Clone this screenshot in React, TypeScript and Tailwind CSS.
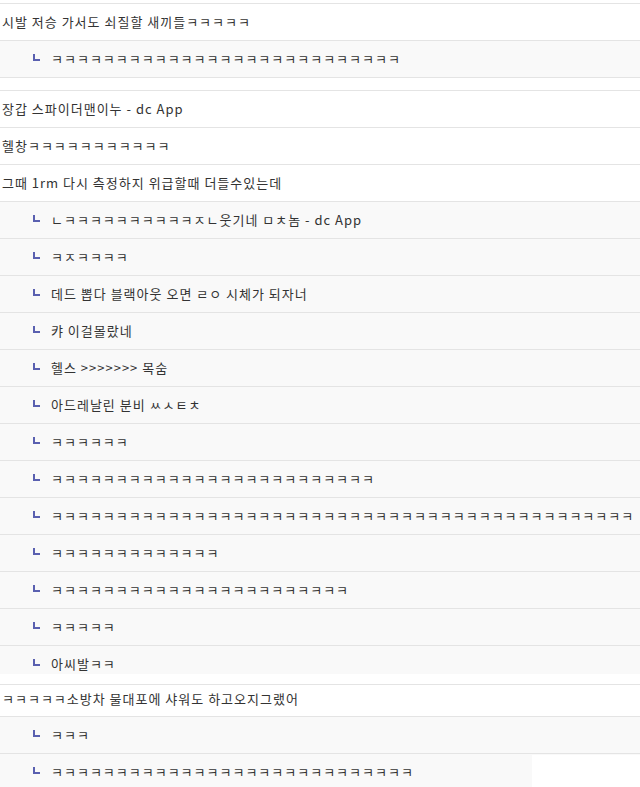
const font = { fontFamily: '"Noto Sans CJK KR", "Liberation Sans", sans-serif' };

const k = (n: number) => "ㅋ".repeat(n);

type Row = { text: string; reply?: boolean };

const firstThread: Row[] = [
  { text: "시발 저승 가서도 쇠질할 새끼들" + k(5) },
  { text: k(27), reply: true },
];

const secondThread: Row[] = [
  { text: "장갑 스파이더맨이누 - dc App" },
  { text: "헬창" + k(11) },
  { text: "그때 1rm 다시 측정하지 위급할때 더들수있는데" },
  { text: "ㄴ" + k(10) + "ㅈㄴ웃기네 ㅁㅊ놈 - dc App", reply: true },
  { text: "ㅋㅈ" + k(4), reply: true },
  { text: "데드 뽑다 블랙아웃 오면 ㄹㅇ 시체가 되자너", reply: true },
  { text: "캬 이걸몰랐네", reply: true },
  { text: "헬스 >>>>>>> 목숨", reply: true },
  { text: "아드레날린 분비 ㅆㅅㅌㅊ", reply: true },
  { text: k(6), reply: true },
  { text: k(25), reply: true },
  { text: k(45), reply: true },
  { text: k(13), reply: true },
  { text: k(23), reply: true },
  { text: k(5), reply: true },
];

function ReplyMark() {
  return (
    <svg width="7" height="7" viewBox="0 0 7 7" className="-mt-[3px] shrink-0">
      <path d="M0 0h2v5h5v2H0z" fill="#5a60b0" />
    </svg>
  );
}

function CommentRow({ text, reply }: Row) {
  if (reply) {
    return (
      <div className="flex h-[37px] items-center gap-[11px] whitespace-nowrap border-t border-[#e4e4e4] bg-[#f9f9f9] pl-[33px] text-[13px] tracking-[1px] text-[#333]">
        <ReplyMark />
        <span>{text}</span>
      </div>
    );
  }
  return (
    <div className="flex h-[37px] items-center whitespace-nowrap border-t border-[#e4e4e4] bg-white pl-[2px] text-[13px] tracking-[1px] text-[#333]">
      {text}
    </div>
  );
}

export default function App() {
  return (
    <div className="h-[787px] w-[640px] overflow-hidden bg-white pt-[3px]" style={font}>
      {/* first thread */}
      <div className="border-b border-[#e4e4e4]">
        {firstThread.map((r, i) => (
          <CommentRow key={i} {...r} />
        ))}
      </div>

      {/* second thread, last reply is cut off in the capture */}
      <div className="mt-3">
        {secondThread.map((r, i) => (
          <CommentRow key={i} {...r} />
        ))}
        <div className="h-[29px] overflow-hidden">
          <CommentRow text="아씨발ㅋㅋ" reply />
        </div>
      </div>

      {/* third thread */}
      <div className="mt-[10px]">
        <div className="flex h-[32px] items-center whitespace-nowrap border-t border-[#e4e4e4] bg-white pb-1 pl-[2px] text-[13px] tracking-[1px] text-[#333]">
          {k(5)}소방차 물대포에 샤워도 하고오지그랬어
        </div>
        <CommentRow text={k(3)} reply />
        <div className="relative">
          <CommentRow text={k(28)} reply />
          <div className="absolute bottom-[1px] right-0 top-[2px] w-[108px] bg-white" />
        </div>
      </div>
    </div>
  );
}
